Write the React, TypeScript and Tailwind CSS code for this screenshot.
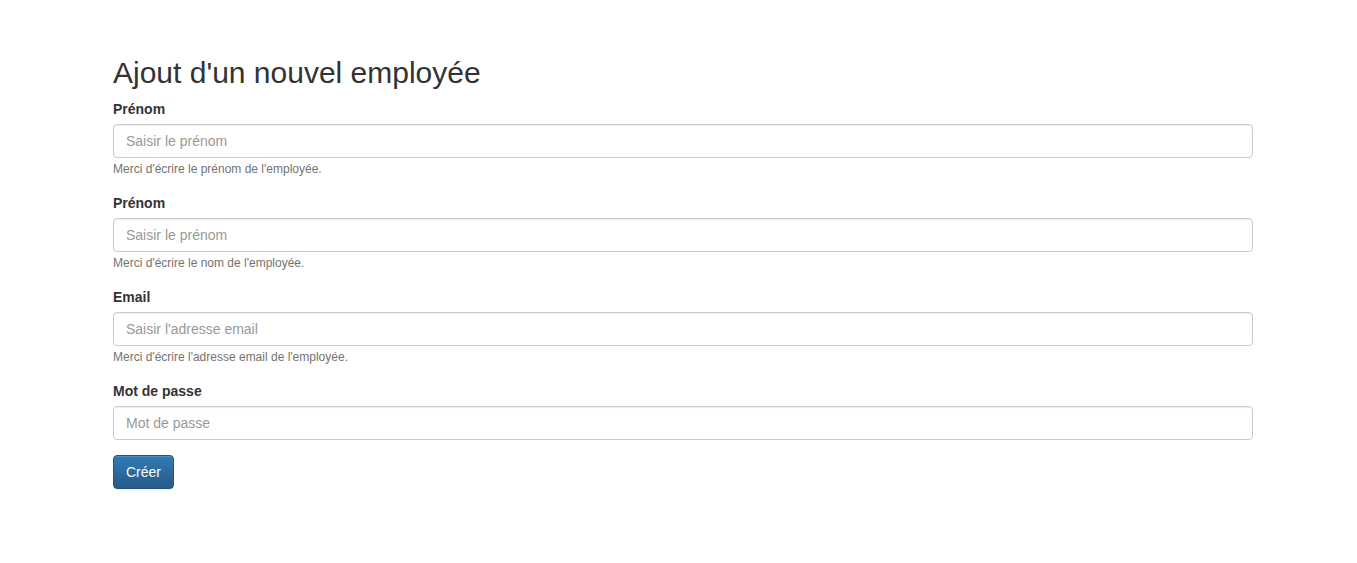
import { FC } from 'react';

interface FieldProps {
  label: string;
  placeholder: string;
  type?: string;
  help?: string;
}

const Field: FC<FieldProps> = ({ label, placeholder, type = 'text', help }) => {
  return (
    <div className="mb-[15px]">
      <label className="mb-[5px] block text-[14px] leading-[20px] font-bold">{label}</label>
      <input
        type={type}
        placeholder={placeholder}
        className="block h-[34px] w-full rounded-[4px] border border-[#ccc] bg-white px-[12px] py-[6px] text-[14px] leading-[20px] text-[#555] shadow-[inset_0_1px_1px_rgba(0,0,0,0.075)] placeholder:text-[#999] focus:outline-none"
      />
      {help && (
        <div className="h-[20px] text-[14px] leading-[20px]">
          <small className="text-[12px] text-[#737373]">{help}</small>
        </div>
      )}
    </div>
  );
};

export default function App() {
  return (
    <div className="min-h-screen bg-white font-['Liberation_Sans',Arial,sans-serif] text-[#333]">
      <div className="ml-[113px] w-[1140px] pt-[56px]">
        <h2 className="mb-[10px] text-[30px] leading-[33px] font-normal">Ajout d'un nouvel employée</h2>
        <form>
          <Field label="Prénom" placeholder="Saisir le prénom" help="Merci d'écrire le prénom de l'employée." />
          <Field label="Prénom" placeholder="Saisir le prénom" help="Merci d'écrire le nom de l'employée." />
          <Field
            label="Email"
            type="email"
            placeholder="Saisir l'adresse email"
            help="Merci d'écrire l'adresse email de l'employée."
          />
          <Field label="Mot de passe" type="password" placeholder="Mot de passe" />
          <button
            type="button"
            className="h-[34px] rounded-[4px] border border-[#245580] bg-gradient-to-b from-[#337ab7] to-[#265a88] px-[12px] text-[14px] leading-[20px] text-white shadow-[inset_0_1px_0_rgba(255,255,255,0.15),0_1px_1px_rgba(0,0,0,0.075)]"
          >
            Créer
          </button>
        </form>
      </div>
    </div>
  );
}
